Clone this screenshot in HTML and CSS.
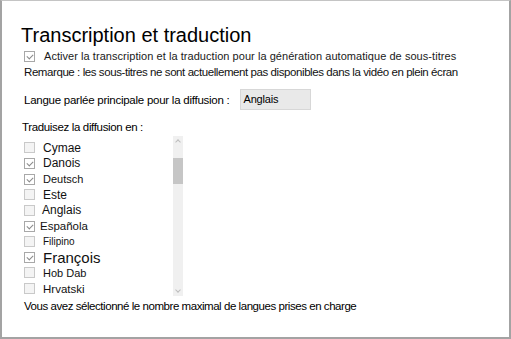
FILE: index.html
```html
<!DOCTYPE html>
<html lang="fr">
<head>
<meta charset="utf-8">
<link rel="stylesheet" href="styles.css">
</head>
<body>
<div class="panel">
  <h1 class="title">Transcription et traduction</h1>
  <div class="enable">
    <span class="cb checked"></span>
    <span class="enable-label">Activer la transcription et la traduction pour la génération automatique de sous-titres</span>
  </div>
  <p class="note">Remarque : les sous-titres ne sont actuellement pas disponibles dans la vidéo en plein écran</p>
  <div class="lang-row">
    <span class="lang-label">Langue parlée principale pour la diffusion :</span>
    <span class="lang-box">Anglais</span>
  </div>
  <p class="translate-label">Traduisez la diffusion en :</p>
  <div class="list-wrap">
    <ul class="list">
      <li class="item"><span class="cb"></span><span class="lbl s12">Cymae</span></li>
      <li class="item"><span class="cb checked"></span><span class="lbl s12">Danois</span></li>
      <li class="item"><span class="cb checked"></span><span class="lbl s11">Deutsch</span></li>
      <li class="item"><span class="cb"></span><span class="lbl s12">Este</span></li>
      <li class="item"><span class="cb"></span><span class="lbl s12 l-1">Anglais</span></li>
      <li class="item"><span class="cb checked"></span><span class="lbl s115 l-3">Española</span></li>
      <li class="item"><span class="cb"></span><span class="lbl s10">Filipino</span></li>
      <li class="item"><span class="cb checked"></span><span class="lbl s15">François</span></li>
      <li class="item"><span class="cb"></span><span class="lbl s11">Hob Dab</span></li>
      <li class="item"><span class="cb"></span><span class="lbl s115">Hrvatski</span></li>
    </ul>
    <div class="scrollbar">
      <span class="arrow up"></span>
      <span class="thumb"></span>
      <span class="arrow down"></span>
    </div>
  </div>
  <p class="max-note">Vous avez sélectionné le nombre maximal de langues prises en charge</p>
</div>
</body>
</html>
```

FILE: styles.css
```css
html, body {
  margin: 0;
  padding: 0;
  background: #ffffff;
}

.panel {
  box-sizing: border-box;
  width: 511px;
  height: 339px;
  border: 2px solid #a3a3a3;
  border-top: 1px solid #c4c4c4;
  padding: 23px 0 0 19px;
  font-family: "Liberation Sans", Arial, sans-serif;
  color: #000;
}

.title {
  margin: 0;
  font-size: 20px;
  font-weight: normal;
  line-height: 23px;
}

.enable {
  display: flex;
  align-items: center;
  height: 16px;
  margin-top: 1px;
}

.cb {
  box-sizing: border-box;
  width: 11px;
  height: 11px;
  border: 1px solid #c9c9c9;
  background: #f4f4f4;
  margin-left: 3px;
  flex: none;
  position: relative;
}

.cb.checked {
  background: #ffffff;
  border-color: #a8a8a8;
}

.cb.checked::after {
  content: "";
  position: absolute;
  left: 2px;
  top: 0px;
  width: 5px;
  height: 3px;
  border-left: 1px solid #8a8a8a;
  border-bottom: 1px solid #8a8a8a;
  transform: rotate(-45deg);
  transform-origin: center;
  margin-top: 2px;
}

.enable-label {
  margin-left: 9px;
  font-size: 11px;
  letter-spacing: 0.05px;
  color: #1a1a1a;
}

.note {
  margin: 0 0 0 3px;
  font-size: 11.5px;
  line-height: 16px;
  letter-spacing: -0.42px;
  color: #111;
}

.lang-row {
  display: flex;
  align-items: center;
  margin-top: 9px;
}

.lang-label {
  font-size: 11.5px;
  letter-spacing: -0.25px;
  margin-left: 3px;
}

.lang-box {
  box-sizing: border-box;
  width: 71px;
  height: 21px;
  margin-left: 10px;
  padding: 3px 0 0 3px;
  background: #e9e9e9;
  border: 1px solid #d7d7d7;
  font-size: 11px;
  letter-spacing: -0.2px;
}

.translate-label {
  margin: 9px 0 0 1px;
  font-size: 11.5px;
  line-height: 16px;
  letter-spacing: -0.35px;
}

.list-wrap {
  display: flex;
  width: 162px;
  height: 160px;
  margin-top: 1px;
}

.list {
  list-style: none;
  margin: 0;
  padding: 4px 0 0 0;
  flex: 1;
}

.item {
  display: flex;
  align-items: center;
  height: 15.65px;
}

.lbl {
  margin-left: 8px;
  color: #111;
}

.s10 { font-size: 10px; }
.s11 { font-size: 11px; }
.s115 { font-size: 11.5px; }
.s12 { font-size: 12px; }
.s15 { font-size: 15px; }
.l-1 { margin-left: 7px; }
.l-3 { margin-left: 5px; }

.scrollbar {
  width: 10px;
  background: #f0f0f0;
  display: flex;
  flex-direction: column;
  align-items: center;
}

.arrow {
  display: block;
  width: 10px;
  height: 10px;
  position: relative;
}

.arrow::after {
  content: "";
  position: absolute;
  left: 3px;
  width: 3px;
  height: 3px;
  border-left: 1px solid #bdbdbd;
  border-top: 1px solid #bdbdbd;
}

.arrow.up::after {
  top: 4px;
  transform: rotate(45deg);
}

.arrow.down::after {
  top: 2px;
  transform: rotate(225deg);
}

.thumb {
  display: block;
  width: 10px;
  height: 26px;
  margin-top: 12px;
  background: #c6c6c6;
}

.down {
  margin-top: auto;
}

.max-note {
  margin: 2px 0 0 3px;
  font-size: 11.5px;
  letter-spacing: -0.45px;
  line-height: 16px;
}
```
